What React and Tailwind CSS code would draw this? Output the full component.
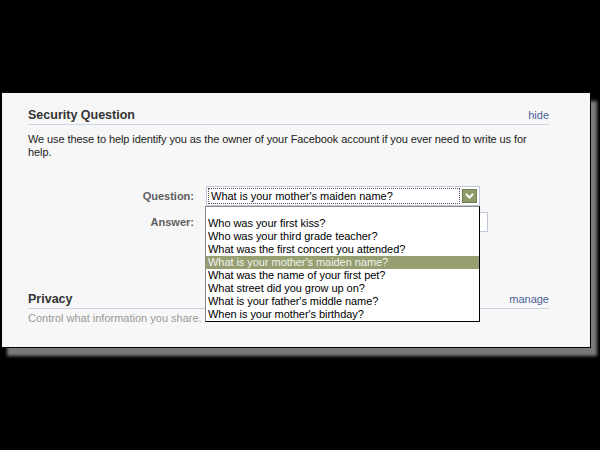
export default function App() {
  const items = [
    "Who was your first kiss?",
    "Who was your third grade teacher?",
    "What was the first concert you attended?",
    "What is your mother's maiden name?",
    "What was the name of your first pet?",
    "What street did you grow up on?",
    "What is your father's middle name?",
    "When is your mother's birthday?",
  ];
  return (
    <div className="w-[600px] h-[450px] bg-black pt-[93px] font-['Liberation_Sans',Arial,sans-serif] text-[11px]">
      <div className="ml-[1px] w-[590px] h-[255px] bg-[#f7f7f7] border-x border-b border-black shadow-[6px_8px_3px_#7a7a7a] pl-[26px] pr-[41px] pt-[13px] text-[#333]">
        <div className="flex justify-between items-end h-[19px] border-b border-[#ccd3e4] pb-[1px] leading-[15px]">
          <span className="font-bold text-[12.5px] text-[#333]">Security Question</span>
          <span className="text-[#4b5f95]">hide</span>
        </div>
        <p className="mt-[8px] leading-[13px] text-[#222] whitespace-nowrap tracking-[-0.09px]">
          We use these to help identify you as the owner of your Facebook account if you ever need to write us for
          <br />
          help.
        </p>
        <div className="mt-[27px] flex items-center h-[20px]">
          <div className="w-[166px] text-right font-bold text-[#5e5e5e]">Question:</div>
          <div className="ml-[12px] relative z-10">
            <div className="w-[274px] h-[20px] border border-[#bdc7d8] bg-white flex items-center pl-[1px] pr-[2px]">
              <div className="flex-1 h-[16px] border border-dotted border-[#555] flex items-center pl-[2px] text-black leading-[14px]">
                What is your mother's maiden name?
              </div>
              <div className="ml-[2px] w-[15px] h-[14px] bg-[#8c9c6a] border border-[#6f7f4f] flex items-center justify-center">
                <svg width="9" height="6" viewBox="0 0 9 6">
                  <path d="M1 1 L4.5 4.5 L8 1" stroke="white" strokeWidth="2" fill="none" />
                </svg>
              </div>
            </div>
            <div className="absolute top-full left-[-1px] w-[275px] bg-white border border-[#8a8a8a] border-r-black border-b-black text-black tracking-[-0.05px]">
              <div className="h-[10px]" />
              {items.map((t, i) => (
                <div
                  key={i}
                  className={
                    i === 3
                      ? "h-[13px] leading-[13px] pl-[2px] bg-[#959f6f] text-[#f2f2f2] whitespace-nowrap"
                      : "h-[13px] leading-[13px] pl-[2px] whitespace-nowrap"
                  }
                >
                  {t}
                </div>
              ))}
            </div>
          </div>
        </div>
        <div className="mt-[6px] flex items-center h-[20px]">
          <div className="w-[166px] text-right font-bold text-[#5e5e5e]">Answer:</div>
          <div className="ml-[12px] w-[282px] h-[20px] border border-[#bdc7d8] bg-white" />
        </div>
        <div className="mt-[58px] flex justify-between items-end h-[19px] border-b border-[#ccd3e4] pb-[1px] leading-[15px]">
          <span className="font-bold text-[12.5px] text-[#333]">Privacy</span>
          <span className="text-[#4b5f95]">manage</span>
        </div>
        <p className="mt-[3px] leading-[13px] text-[#999]">Control what information you share.</p>
      </div>
    </div>
  );
}
